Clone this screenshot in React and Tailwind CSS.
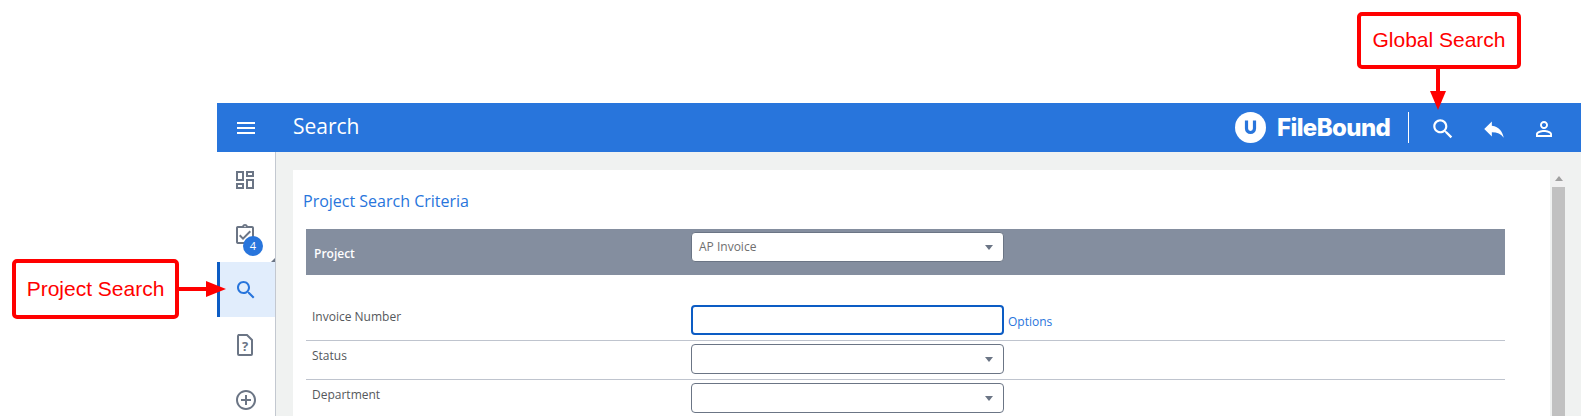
import React from "react";

const Icon = ({ d, className }) => (
  <svg viewBox="0 0 24 24" fill="currentColor" className={className}>
    <path d={d} />
  </svg>
);

const P = {
  search: "M15.5 14h-.79l-.28-.27C15.41 12.59 16 11.11 16 9.5 16 5.91 13.09 3 9.5 3S3 5.91 3 9.5 5.91 16 9.5 16c1.61 0 3.09-.59 4.23-1.57l.27.28v.79l5 4.99L20.49 19l-4.99-5zm-6 0C7.01 14 5 11.99 5 9.5S7.01 5 9.5 5 14 7.01 14 9.5 11.99 14 9.5 14z",
  reply: "M10 9V5l-7 7 7 7v-4.1c5 0 8.5 1.6 11 5.1-1-5-4-10-11-11z",
  person: "M12 5.9c1.16 0 2.1.94 2.1 2.1s-.94 2.1-2.1 2.1S9.9 9.16 9.9 8s.94-2.1 2.1-2.1m0 9c2.97 0 6.1 1.46 6.1 2.1v1.1H5.9V17c0-.64 3.13-2.1 6.1-2.1M12 4C9.79 4 8 5.79 8 8s1.79 4 4 4 4-1.79 4-4-1.79-4-4-4zm0 9c-2.67 0-8 1.34-8 4v3h16v-3c0-2.66-5.33-4-8-4z",
  dashboard: "M19 5v2h-4V5h4M9 5v6H5V5h4m10 8v6h-4v-6h4M9 17v2H5v-2h4M21 3h-8v6h8V3zM11 3H3v10h8V3zm10 8h-8v10h8V11zm-10 4H3v6h8v-6z",
  task: "M18 9l-1.41-1.42L10 14.17l-2.59-2.58L6 13l4 4zm1-6h-4.18C14.4 1.84 13.3 1 12 1c-1.3 0-2.4.84-2.82 2H5c-.14 0-.27.01-.4.04-.39.08-.74.28-1.01.55-.18.18-.33.4-.43.64-.1.23-.16.49-.16.77v14c0 .27.06.54.16.78s.25.45.43.64c.27.27.62.47 1.01.55.13.02.26.03.4.03h14c1.1 0 2-.9 2-2V5c0-1.1-.9-2-2-2zm-7-.25c.41 0 .75.34.75.75s-.34.75-.75.75-.75-.34-.75-.75.34-.75.75-.75zM19 19H5V5h14v14z",
  add: "M13 7h-2v4H7v2h4v4h2v-4h4v-2h-4V7zm-1-5C6.48 2 2 6.48 2 12s4.48 10 10 10 10-4.48 10-10S17.52 2 12 2zm0 18c-4.41 0-8-3.59-8-8s3.59-8 8-8 8 3.59 8 8-3.59 8-8 8z",
};

const Caret = () => (
  <span className="w-0 h-0 border-l-[4px] border-r-[4px] border-t-[5px] border-l-transparent border-r-transparent border-t-[#6b7585]" />
);

const Select = ({ value, className = "" }) => (
  <div className={`w-[313px] h-[30px] bg-white border border-[#6b7585] rounded-[4px] flex items-center justify-between pl-[7px] pr-[10px] text-[12px] text-[#6f6f6f] ${className}`}>
    <span>{value}</span>
    <Caret />
  </div>
);

const Row = ({ label, children, height, textTop }) => (
  <div className={`flex border-b border-[#bfc4ce] ${height}`}>
    <div className={`w-[385px] pl-[6px] text-[12px] leading-[16px] text-[#55585c] ${textTop}`}>{label}</div>
    {children}
  </div>
);

const DocHelp = ({ className }) => (
  <svg viewBox="0 0 20 24" className={className} fill="none">
    <path d="M3 2h9l5 5v14a1 1 0 0 1-1 1H4a1 1 0 0 1-1-1V3a1 1 0 0 1 1-1z" stroke="currentColor" strokeWidth="2" />
    <text x="10" y="17.5" textAnchor="middle" fontSize="13" fontWeight="700" fill="currentColor" fontFamily="'Open Sans', sans-serif">?</text>
  </svg>
);

export default function App() {
  return (
    <div className="relative h-[416px] w-full overflow-hidden bg-white pt-[103px] pl-[217px] font-['Open_Sans',sans-serif]">
      <header className="h-[49px] bg-[#2875dc] flex items-center text-white">
        <div className="w-[58px] flex justify-center">
          <svg width="18" height="12" viewBox="0 0 18 12" fill="white">
            <rect y="0" width="18" height="2" />
            <rect y="5" width="18" height="2" />
            <rect y="10" width="18" height="2" />
          </svg>
        </div>
        <h1 className="ml-[18px] mb-[2px] text-[21px] font-normal leading-none">Search</h1>
        <div className="ml-auto flex items-center">
          <div className="w-[31px] h-[31px] rounded-full bg-white flex items-center justify-center">
            <svg width="15" height="17" viewBox="0 0 15 17" fill="none">
              <path d="M3.5 1.5V9.5a4 4 0 0 0 8 0V1.5" stroke="#2875dc" strokeWidth="3.2" />
            </svg>
          </div>
          <span className="ml-[11px] w-[116px] text-[24px] font-extrabold font-['Inter',sans-serif] tracking-[-0.6px] leading-none whitespace-nowrap">FileBound</span>
          <div className="ml-[15px] w-px h-[31px] bg-white" />
          <Icon d={P.search} className="ml-[21px] w-[26px] h-[26px] mt-[3px]" />
          <Icon d={P.reply} className="ml-[25px] w-[26px] h-[26px] mt-[3px]" />
          <Icon d={P.person} className="ml-[25px] w-[24px] h-[24px] mt-[3px] mr-[25px]" />
        </div>
      </header>

      <div className="flex h-[264px]">
        <nav className="relative w-[59px] shrink-0 border-r border-[#c3c8d0] bg-white text-[#6b7585] flex flex-col">
          <div className="h-[55px] shrink-0 flex items-center justify-center pr-[2px]">
            <Icon d={P.dashboard} className="w-[24px] h-[24px]" />
          </div>
          <div className="relative h-[55px] shrink-0 flex items-center justify-center pr-[2px]">
            <Icon d={P.task} className="w-[24px] h-[24px]" />
            <span className="absolute left-[26px] top-[29px] w-[20px] h-[20px] rounded-full bg-[#2875dc] text-white text-[11px] flex items-center justify-center">4</span>
            <span className="absolute right-0 bottom-0 w-0 h-0 border-l-[4px] border-b-[4px] border-l-transparent border-b-[#6b7585]" />
          </div>
          <div className="h-[55px] shrink-0 flex items-center justify-center bg-[#e1edfc] border-l-[3px] border-[#0c5cc4] pr-[4px] text-[#2875dc]">
            <Icon d={P.search} className="w-[24px] h-[24px]" />
          </div>
          <div className="h-[55px] shrink-0 flex items-center justify-center pr-[2px]">
            <DocHelp className="w-[20px] h-[24px]" />
          </div>
          <div className="h-[55px] shrink-0 flex items-center justify-center pr-[1px]">
            <Icon d={P.add} className="w-[24px] h-[24px]" />
          </div>
        </nav>

        <main className="flex-1 bg-[#f0f2f1] pt-[18px] pl-[17px] flex">
          <section className="w-[1257px] bg-white pl-[10px] pt-[20px]">
            <h2 className="text-[16px] leading-[22px] font-normal text-[#2875dc]">Project Search Criteria</h2>
            <div className="ml-[3px] mt-[17px] w-[1199px]">
              <div className="h-[46px] bg-[#848e9f] flex">
                <div className="w-[385px] pl-[8px] pt-[17px] text-[12px] leading-[16px] font-semibold text-white">Project</div>
                <Select value="AP Invoice" className="mt-[3px] border-[#6b7585]" />
              </div>
              <div className="h-[30px]" />
              <Row label="Invoice Number" height="h-[36px]" textTop="pt-[4px]">
                <div className="w-[313px] h-[30px] border-2 border-[#0c5cc4] rounded-[4px] bg-white" />
                <a className="ml-[4px] mt-[9px] text-[12px] leading-[16px] text-[#2875dc]">Options</a>
              </Row>
              <Row label="Status" height="h-[39px]" textTop="pt-[7px]">
                <Select value="" className="mt-[3px]" />
              </Row>
              <Row label="Department" height="h-[39px]" textTop="pt-[7px]">
                <Select value="" className="mt-[3px]" />
              </Row>
            </div>
          </section>
          <div className="ml-[2px] w-[13px] flex flex-col">
            <div className="h-[17px] bg-[#f1f1f1] flex items-center justify-center">
              <span className="w-0 h-0 border-l-[4px] border-r-[4px] border-b-[5px] border-l-transparent border-r-transparent border-b-[#a0a0a0]" />
            </div>
            <div className="flex-1 bg-[#c1c1c1]" />
          </div>
        </main>
      </div>

      {/* Annotations */}
      <div className="absolute left-[1357px] top-[12px] w-[164px] h-[57px] border-[4px] border-[#ff0000] rounded-[5px] bg-white flex items-center justify-center font-['Liberation_Sans',sans-serif] text-[21px] text-[#ff0000] pb-[2px]">
        Global Search
      </div>
      <div className="absolute left-[1436px] top-[69px] w-[4px] h-[23px] bg-[#ff0000]" />
      <div className="absolute left-[1430px] top-[91px] w-0 h-0 border-l-[8px] border-r-[8px] border-t-[19px] border-l-transparent border-r-transparent border-t-[#ff0000]" />

      <div className="absolute left-[12px] top-[259px] w-[167px] h-[60px] border-[4px] border-[#ff0000] rounded-[5px] bg-white flex items-center justify-center font-['Liberation_Sans',sans-serif] text-[21px] text-[#ff0000]">
        Project Search
      </div>
      <div className="absolute left-[179px] top-[287px] w-[28px] h-[4px] bg-[#ff0000]" />
      <div className="absolute left-[206px] top-[281px] w-0 h-0 border-t-[8px] border-b-[8px] border-l-[20px] border-t-transparent border-b-transparent border-l-[#ff0000]" />
    </div>
  );
}
